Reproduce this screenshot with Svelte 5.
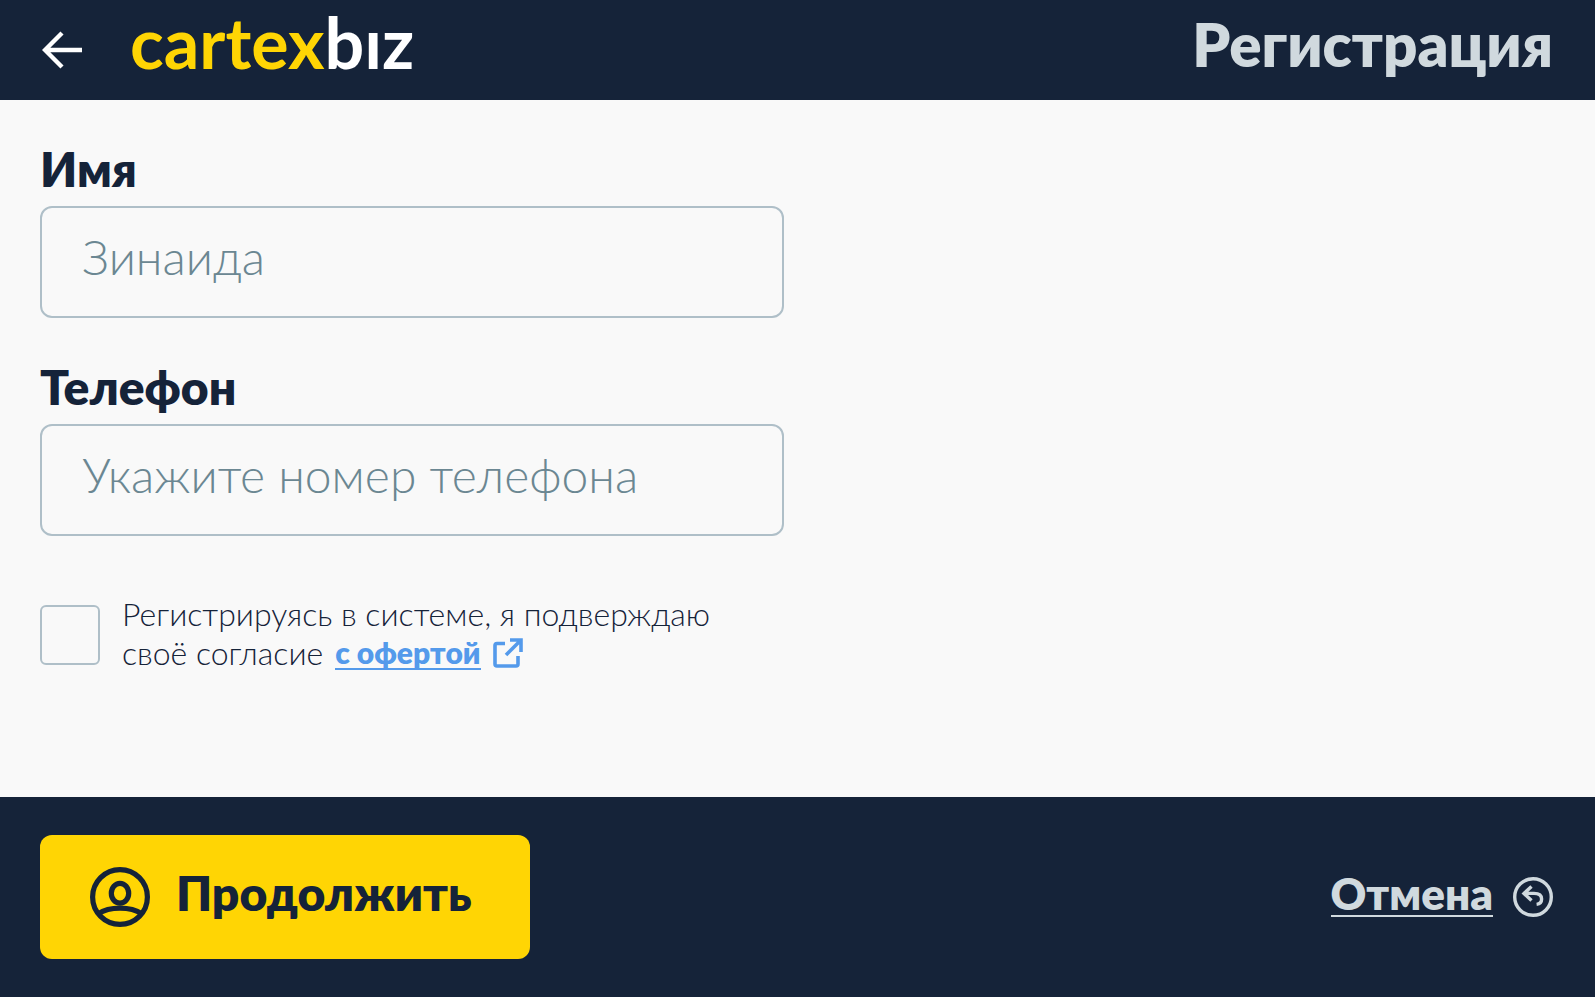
<script>
	let name = $state("");
	let phone = $state("");
	let agreed = $state(false);
</script>

<div class="page">
	<header>
		<button class="back" type="button" aria-label="Назад">
			<svg viewBox="0 0 40 38" fill="none" stroke="currentColor" stroke-width="4.4">
				<path d="M40 19H3M20 2L3 19L20 36" />
			</svg>
		</button>
		<a class="logo" href="#home"><span class="brand">cartex</span>bız</a>
		<h1>Регистрация</h1>
	</header>

	<main>
		<form id="signup" onsubmit={(event) => event.preventDefault()}>
			<div class="field">
				<label for="name">Имя</label>
				<input id="name" type="text" placeholder="Зинаида" bind:value={name} />
			</div>
			<div class="field">
				<label for="phone">Телефон</label>
				<input id="phone" type="tel" placeholder="Укажите номер телефона" bind:value={phone} />
			</div>
			<div class="terms">
				<input id="agree" type="checkbox" bind:checked={agreed} />
				<label for="agree">
					<span class="line">Регистрируясь в системе, я подверждаю</span>
					<span class="line">
						<span>своё согласие</span>
						<a href="#offer">
							<span>с офертой</span>
							<svg viewBox="0 0 30 30" fill="none" stroke="currentColor" stroke-width="3.6" aria-hidden="true">
								<path d="M12 5.5H4Q2 5.5 2 7.5V26Q2 28 4 28H23Q25 28 25 26V18" />
								<path d="M13 17L27 3M17 2H28V14" />
							</svg>
						</a>
					</span>
				</label>
			</div>
		</form>
	</main>

	<footer>
		<button class="submit" type="submit" form="signup">
			<svg viewBox="0 0 60 60" fill="none" stroke="currentColor" stroke-width="5.2" aria-hidden="true">
				<circle cx="30" cy="30" r="27.4" />
				<ellipse cx="30" cy="26.3" rx="8.7" ry="9.9" />
				<path d="M8 47C14 43 21 41.2 30 41.2S46 43 52 47" />
			</svg>
			<span>Продолжить</span>
		</button>
		<a class="cancel" href="#cancel">
			<span>Отмена</span>
			<svg viewBox="0 0 40 40" fill="none" stroke="currentColor" stroke-width="3.4" aria-hidden="true">
				<circle cx="20" cy="20" r="18.3" />
				<path d="M10 16.4H21C26 16.4 28.6 18.6 28.6 22C28.6 25 27 27 23.6 27.4M18.5 9.5L11 16.4L18.5 23.5" />
			</svg>
		</a>
	</footer>
</div>

<style>
	:global(body) {
		margin: 0;
	}

	.page {
		display: flex;
		flex-direction: column;
		min-height: 100vh;
		font-family: Lato, "Open Sans", sans-serif;
		color: #152339;
		background: #f9f9f9;
	}

	.page * {
		box-sizing: border-box;
	}

	button,
	input {
		font-family: inherit;
		color: inherit;
	}

	svg {
		display: block;
		flex: none;
	}

	header {
		display: flex;
		align-items: center;
		height: 100px;
		padding: 0 42px;
		color: #fff;
		background: #152339;
	}

	.back {
		padding: 0;
		border: 0;
		background: none;
		cursor: pointer;
	}

	.back svg {
		width: 40px;
		height: 38px;
	}

	.logo {
		margin-left: 48px;
		padding-bottom: 16px;
		font-size: 70px;
		font-weight: 700;
		line-height: 80px;
		color: #fff;
		text-decoration: none;
	}

	.brand {
		color: #ffd504;
	}

	h1 {
		margin: 0 0 0 auto;
		padding-bottom: 12px;
		font-size: 60px;
		font-weight: 800;
		line-height: 72px;
		color: #d0d9de;
	}

	main {
		flex: 1;
		padding: 40px;
	}

	form {
		max-width: 744px;
	}

	.field {
		margin-bottom: 40px;
	}

	.field label {
		display: block;
		padding-bottom: 8px;
		font-size: 48px;
		font-weight: 800;
		line-height: 58px;
	}

	.field input {
		display: block;
		width: 100%;
		height: 112px;
		padding: 0 40px 12px;
		border: 2px solid #afbfc8;
		border-radius: 12px;
		font-size: 48px;
		font-weight: 300;
		background: transparent;
	}

	.field input::placeholder {
		color: #6b8792;
		opacity: 1;
	}

	.terms {
		display: flex;
		align-items: center;
		gap: 22px;
		margin-top: 58px;
		font-size: 32px;
		font-weight: 300;
		line-height: 39px;
	}

	.terms label {
		padding-bottom: 4px;
	}

	.terms input {
		flex: none;
		appearance: none;
		width: 60px;
		height: 60px;
		margin: 0;
		border: 2px solid #afbfc8;
		border-radius: 6px;
	}

	.terms input:checked {
		background: #afbfc8;
	}

	.line {
		display: flex;
		gap: 12px;
	}

	.terms a {
		display: flex;
		align-items: center;
		gap: 12px;
		font-size: 30px;
		font-weight: 800;
		color: #549aeb;
		text-decoration: none;
	}

	.terms a span {
		line-height: 32px;
		border-bottom: 2px solid;
	}

	.terms svg {
		width: 30px;
		height: 30px;
	}

	footer {
		display: flex;
		align-items: center;
		justify-content: space-between;
		height: 200px;
		padding: 0 42px 0 40px;
		background: #152339;
	}

	.submit {
		display: flex;
		align-items: center;
		gap: 26px;
		height: 124px;
		padding: 0 58px 0 50px;
		border: 0;
		border-radius: 12px;
		font-size: 48px;
		font-weight: 800;
		background: #ffd504;
		cursor: pointer;
	}

	.submit span {
		padding-bottom: 10px;
	}

	.submit svg {
		width: 60px;
		height: 60px;
	}

	.cancel {
		display: flex;
		align-items: center;
		gap: 20px;
		font-size: 44px;
		font-weight: 800;
		color: #d0d9de;
		text-decoration: none;
	}

	.cancel span {
		margin-bottom: 6px;
		line-height: 44px;
		border-bottom: 2px solid;
	}

	.cancel svg {
		width: 40px;
		height: 40px;
	}
</style>
